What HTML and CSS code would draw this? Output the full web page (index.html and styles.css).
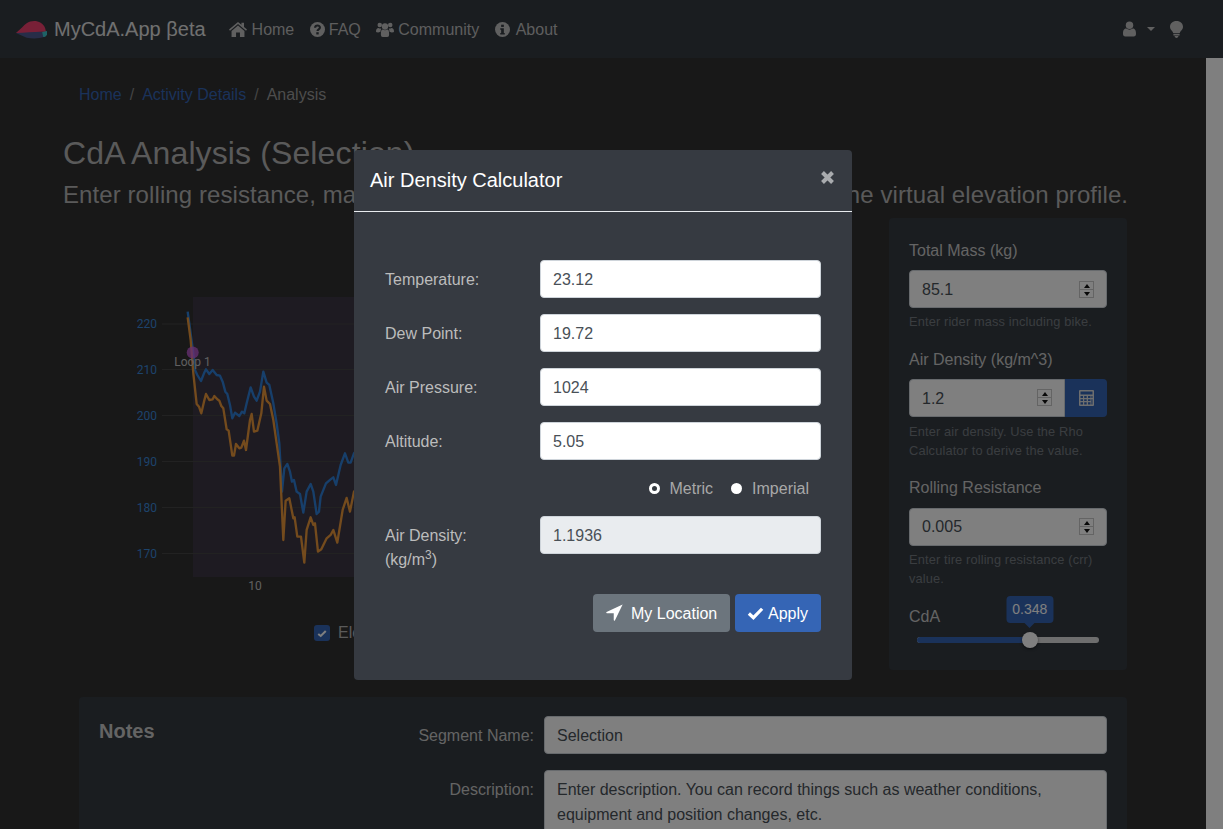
FILE: index.html
```html
<!DOCTYPE html>
<html>
<head>
	<meta charset="utf-8">
	<meta name="viewport" content="width=device-width, initial-scale=1">
	<title>MyCdA.App</title>
	<link rel="stylesheet" href="styles.css">
</head>
<body>
	<nav class="navbar">
		<a class="brand">
			<svg class="logo" viewBox="0 0 34 20"><path class="logo-navy" d="M1 13 L12 18 Q22 20 31 17 L31 12 L10 10z"/><path class="logo-red" d="M1 13 C6 9 9 5 12 3 C18 -1 28 0 31 8 L32 12 C24 11 12 13 1 13z"/><path class="logo-teal" d="M28 12 L33 11 L33 15 Q31 18 29 17z"/></svg>
			MyCdA.App βeta
		</a>
		<a class="nav-link">
			<svg class="ic ic-home" viewBox="0 0 24 20"><path d="M12 0 L0 10 l1.3 1.6 L12 2.7 l10.7 8.9 L24 10 l-4-3.4 V1 h-3.4 v2.8z M12 4.8 L3.4 12 v8 h6 v-6 h5.2 v6 h6 v-8z"/></svg>
			Home</a>
		<a class="nav-link">
			<svg class="ic ic-round" viewBox="0 0 20 20"><circle cx="10" cy="10" r="10"/><path class="ic-cut" d="M6.8 7.6 C7 3.8 13.2 3.8 13.2 7.4 C13.2 9.8 10 9.8 10 12"/><rect class="ic-hole" x="8.4" y="13.6" width="3.2" height="3"/></svg>
			FAQ</a>
		<a class="nav-link">
			<svg class="ic ic-users" viewBox="0 0 24 20"><circle cx="5" cy="4" r="3"/><circle cx="19" cy="4" r="3"/><circle cx="12" cy="6" r="4.2"/><path d="M0 13 Q0 8 3.5 8 Q5 9 7 8.6 Q6 11 6 13 L3 14 Q0 14 0 13z M24 13 Q24 8 20.5 8 Q19 9 17 8.6 Q18 11 18 13 L21 14 Q24 14 24 13z M6.5 17 C6.5 12 7 10 9 10 Q12 12 15 10 C17 10 17.5 12 17.5 17 Q17.5 20 15 20 H9 Q6.5 20 6.5 17z"/></svg>
			Community</a>
		<a class="nav-link">
			<svg class="ic ic-round ic-info" viewBox="0 0 20 20"><circle cx="10" cy="10" r="10"/><rect class="ic-hole" x="8.2" y="3.6" width="3.6" height="3"/><path class="ic-hole" d="M7 8.2 h4.8 v6.4 h1.2 v2 H7 v-2 h1.2 v-4.4 H7z"/></svg>
			About</a>
		<div class="nav-right">
			<svg class="ic ic-user" viewBox="0 0 14 16"><circle cx="7" cy="4" r="4"/><path d="M0 13 C0 9 1.5 7.5 3.4 7.5 Q7 10 10.6 7.5 C12.5 7.5 14 9 14 13 Q14 16 11.5 16 H2.5 Q0 16 0 13z"/></svg>
			<span class="caret"></span>
			<svg class="ic ic-bulb" viewBox="0 0 13 17"><path d="M6.5 0 C2.6 0 0 2.6 0 5.8 C0 9 2.6 9.6 3.2 12 H9.8 C10.4 9.6 13 9 13 5.8 C13 2.6 10.4 0 6.5 0z M3.4 12.8 H9.6 V14.4 H3.4z M4.4 15.1 H8.6 Q7.8 17 6.5 17 Q5.2 17 4.4 15.1z"/></svg>
		</div>
	</nav>

	<div class="page">
		<main class="content">
			<ol class="breadcrumb">
				<li><a>Home</a></li>
				<li class="sep">/</li>
				<li><a>Activity Details</a></li>
				<li class="sep">/</li>
				<li>Analysis</li>
			</ol>
			<h2 class="title">CdA Analysis (Selection)</h2>
			<h4 class="subtitle">Enter rolling resistance, mass, and air density, then adjust CdA to flatten the virtual elevation profile.</h4>

			<div class="analysis">
				<div class="chart-col">
					<svg class="chart" viewBox="79 218 810 400">
						<rect class="plot-bg" x="193" y="297" width="640" height="280"/>
						<g class="grid">
							<line x1="162" x2="833" y1="324" y2="324"/>
							<line x1="162" x2="833" y1="369.5" y2="369.5"/>
							<line x1="162" x2="833" y1="415.5" y2="415.5"/>
							<line x1="162" x2="833" y1="461.5" y2="461.5"/>
							<line x1="162" x2="833" y1="507.5" y2="507.5"/>
							<line x1="162" x2="833" y1="553.5" y2="553.5"/>
						</g>
						<g class="y-labels">
							<text x="157" y="328">220</text>
							<text x="157" y="374">210</text>
							<text x="157" y="420">200</text>
							<text x="157" y="466">190</text>
							<text x="157" y="512">180</text>
							<text x="157" y="558">170</text>
						</g>
						<text class="x-label" x="255" y="590">10</text>
						<g transform="translate(100 280) scale(.3333)">
							<polyline class="line-blue" points="263,95 268,130 278,205 285,270 292,285 303,303 312,280 318,268 328,282 338,270 350,285 360,287 368,305 376,335 382,342 390,375 397,415 405,398 418,408 426,395 433,400 440,370 452,322 462,350 470,362 480,335 490,275 500,308 508,315 520,370 530,430 538,490 546,635 553,565 562,552 570,575 576,605 582,600 590,635 600,642 610,698 620,635 632,612 640,635 650,702 657,695 662,650 678,610 692,598 700,592 708,615 722,555 735,520 745,548 752,548 762,520 790,490"/>
							<polyline class="line-orange" points="263,112 272,180 280,280 290,372 297,380 304,400 312,365 318,342 328,360 338,358 343,348 352,358 358,362 364,378 370,385 380,448 386,452 397,527 402,527 408,492 418,505 424,503 432,482 438,510 450,420 455,402 462,455 472,452 484,400 492,320 500,362 510,372 520,420 530,490 540,560 550,780 557,662 568,655 580,715 584,712 592,770 603,770 613,848 620,750 632,712 640,735 645,730 654,815 664,808 680,775 692,765 700,750 712,788 728,690 740,654 750,695 762,635 790,600"/>
						</g>
						<circle class="marker" cx="192.7" cy="352.5" r="6"/>
						<text class="marker-label" x="192.5" y="365.5">Loop 1</text>
					</svg>
					<div class="legend">
						<span class="check"><svg viewBox="0 0 12 10"><polyline points="1.5,5.5 4.5,8 10.5,2"/></svg></span>
						<span>Elevation</span>
						<span class="check"><svg viewBox="0 0 12 10"><polyline points="1.5,5.5 4.5,8 10.5,2"/></svg></span>
						<span>Virtual Elevation</span>
					</div>
				</div>

				<aside class="side-panel">
					<div class="group">
						<label>Total Mass (kg)</label>
						<div class="spin-wrap">
							<input class="field" type="number" value="85.1">
							<span class="spin"><i class="spin-up"></i><i class="spin-down"></i></span>
						</div>
						<small>Enter rider mass including bike.</small>
					</div>
					<div class="group">
						<label>Air Density (kg/m^3)</label>
						<div class="input-group">
							<div class="spin-wrap">
								<input class="field" type="number" value="1.2">
								<span class="spin"><i class="spin-up"></i><i class="spin-down"></i></span>
							</div>
							<button class="calc-btn" type="button">
								<svg viewBox="0 0 15 16"><path fill-rule="evenodd" d="M1 0 H14 Q15 0 15 1 V15 Q15 16 14 16 H1 Q0 16 0 15 V1 Q0 0 1 0z M1.5 1.5 V4.5 H13.5 V1.5z M1.5 6 V8 H4 V6z M5.2 6 V8 H7.7 V6z M9 6 V8 H11.5 V6z M12.4 6 V8 H13.5 V6z M1.5 9.2 V11 H4 V9.2z M5.2 9.2 V11 H7.7 V9.2z M9 9.2 V11 H11.5 V9.2z M12.4 9.2 V14.5 H13.5 V9.2z M1.5 12.2 V14.5 H4 V12.2z M5.2 12.2 V14.5 H7.7 V12.2z M9 12.2 V14.5 H11.5 V12.2z"/></svg>
							</button>
						</div>
						<small>Enter air density. Use the Rho Calculator to derive the value.</small>
					</div>
					<div class="group group-crr">
						<label>Rolling Resistance</label>
						<div class="spin-wrap">
							<input class="field" type="number" value="0.005">
							<span class="spin"><i class="spin-up"></i><i class="spin-down"></i></span>
						</div>
						<small>Enter tire rolling resistance (crr) value.</small>
					</div>
					<label>CdA</label>
					<div class="slider">
						<div class="track"><div class="track-fill" style="width: 62%"></div></div>
						<div class="thumb" style="left: 62%"><span class="bubble">0.348</span></div>
					</div>
				</aside>
			</div>

			<section class="notes">
				<h5>Notes</h5>
				<div class="notes-form">
					<div class="notes-row">
						<label>Segment Name:</label>
						<input class="field" type="text" value="Selection">
					</div>
					<div class="notes-row">
						<label>Description:</label>
						<textarea class="field" rows="3">Enter description. You can record things such as weather conditions, equipment and position changes, etc.</textarea>
					</div>
				</div>
			</section>
		</main>
		<div class="scrollbar"></div>
	</div>

	<!-- modal -->
	<div class="backdrop">
		<div class="modal">
			<div class="modal-header">
				<h5>Air Density Calculator</h5>
				<svg class="close" viewBox="0 0 12 12"><path d="M2 2 L10 10 M10 2 L2 10"/></svg>
			</div>
			<div class="modal-body">
				<div class="calc-row">
					<label>Temperature:</label>
					<input class="field" type="number" value="23.12">
				</div>
				<div class="calc-row">
					<label>Dew Point:</label>
					<input class="field" type="number" value="19.72">
				</div>
				<div class="calc-row">
					<label>Air Pressure:</label>
					<input class="field" type="number" value="1024">
				</div>
				<div class="calc-row">
					<label>Altitude:</label>
					<input class="field" type="number" value="5.05">
				</div>
				<div class="units">
					<span class="radio radio-on"></span><span class="unit-name">Metric</span>
					<span class="radio"></span><span class="unit-name">Imperial</span>
				</div>
				<div class="calc-row calc-result">
					<label>Air Density:<br>(kg/m<sup>3</sup>)</label>
					<input class="field" type="text" value="1.1936" disabled>
				</div>
				<div class="modal-actions">
					<button class="btn btn-gray" type="button">
						<svg viewBox="0 0 18 18"><path d="M17.6 0.4 L0.6 8.6 Q-0.2 9.4 1 9.8 L8.2 9.8 L8.2 17 Q8.6 18.2 9.4 17.4z"/></svg>
						My Location
					</button>
					<button class="btn btn-blue" type="button">
						<svg viewBox="0 0 18 14"><polyline points="2,7.5 6.8,12 16,2.5"/></svg>
						Apply
					</button>
				</div>
			</div>
		</div>
	</div>
</body>
</html>
```

FILE: styles.css
```css
* {
	box-sizing: border-box;
}

html, body {
	height: 100%;
}

body {
	margin: 0;
	overflow: hidden;
	background: #303030;
	color: #b4b4b4;
	font-family: "Liberation Sans", Arial, sans-serif;
	font-size: 16px;
	line-height: 24px;
}

/* navbar */
.navbar {
	display: flex;
	align-items: center;
	height: 58px;
	padding-left: 15px;
	background: #343a40;
}

.brand {
	display: flex;
	align-items: center;
	gap: 6px;
	margin-right: 16px;
	color: #e0e0e0;
	font-size: 20px;
}

.logo {
	width: 33px;
	height: 20px;
	margin-top: 2px;
}
.logo-red { fill: #f0406f; }
.logo-navy { fill: #4e5a90; }
.logo-teal { fill: #3cc4cc; }

.nav-link {
	display: flex;
	align-items: center;
	gap: 4px;
	padding: 2px 8px 0;
	color: #bcbcbc;
	font-size: 16px;
	margin-right: -0.5px;
}
.nav-link .ic {
	margin-top: -2px;
}

.ic {
	fill: #c0c0c0;
	flex: none;
}
.ic-home { width: 18px; height: 15px; margin-left: -1px; margin-right: 1px; }
.ic-round { width: 15px; height: 15px; }
.ic-users { width: 18px; height: 15px; }
.ic-user { width: 13px; height: 16px; }
.ic-bulb { width: 13px; height: 17px; }
.ic-info { margin-right: 2px; }
.ic-hole { fill: #343a40; }
.ic-cut {
	fill: none;
	stroke: #343a40;
	stroke-width: 2.8;
}

.nav-right {
	display: flex;
	align-items: center;
	margin-left: auto;
	padding-right: 40px;
}

.caret {
	width: 0;
	height: 0;
	margin: 0 15px 0 11px;
	border-top: 4px solid #c0c0c0;
	border-left: 4px solid transparent;
	border-right: 4px solid transparent;
}

/* page under the navbar */
.page {
	display: flex;
	height: calc(100% - 58px);
}

.content {
	flex: 1;
	min-width: 0;
	padding: 25px 63px 0 63px;
}

.scrollbar {
	flex: none;
	width: 17px;
	background: #fff;
}

.breadcrumb {
	display: flex;
	gap: 8px;
	margin: 0 0 27px;
	padding: 0 0 0 16px;
	list-style: none;
	color: #9a9a9a;
}
.breadcrumb a { color: #3565b5; }
.sep { color: #888; }

.title {
	margin: 0 0 8px;
	font-size: 32px;
	font-weight: 400;
	line-height: 38.4px;
	letter-spacing: .12px;
}

.subtitle {
	margin: 0 0 9px;
	font-size: 24px;
	font-weight: 400;
	line-height: 29px;
	letter-spacing: .085px;
	white-space: nowrap;
}

.analysis {
	display: flex;
	margin-left: 16px;
	margin-right: 16px;
}

.chart-col {
	flex: 1;
	min-width: 0;
}

.chart {
	display: block;
	width: 810px;
	height: 400px;
}

.plot-bg { fill: #3d3744; }
.grid line {
	stroke: #444;
	stroke-width: 1;
}
.y-labels text {
	fill: #3a86d6;
	font-family: Roboto, sans-serif;
	font-size: 12px;
	text-anchor: end;
}
.x-label, .marker-label {
	fill: #c0c0c0;
	font-family: Roboto, sans-serif;
	font-size: 12px;
	text-anchor: middle;
}
.line-blue, .line-orange {
	fill: none;
	stroke-width: 7;
	stroke-linejoin: round;
}
.line-blue { stroke: #2f7fd6; }
.line-orange { stroke: #e8963a; }
.marker { fill: #d060e8; fill-opacity: .75; }

.legend {
	display: flex;
	align-items: center;
	gap: 8px;
	height: 24px;
	margin-top: 3px;
	padding-left: 235px;
}

.check {
	display: flex;
	align-items: center;
	justify-content: center;
	width: 16px;
	height: 16px;
	border-radius: 3px;
	background: #3565b5;
}
.check svg {
	width: 10px;
	height: 9px;
	fill: none;
	stroke: #fff;
	stroke-width: 2.4;
}

/* inputs */
.field {
	display: block;
	width: 100%;
	height: 38px;
	padding: 7px 12px 5px;
	border: 1px solid #ced4da;
	border-radius: 4px;
	background: #fff;
	color: #495057;
	font: 16px/24px "Liberation Sans", Arial, sans-serif;
	outline: none;
}

.field:disabled {
	background: #e9ecef;
	opacity: 1;
}

.field::-webkit-inner-spin-button {
	-webkit-appearance: none;
}

.spin-wrap {
	position: relative;
	flex: 1;
	min-width: 0;
}

/* old style number stepper, always visible */
.spin {
	position: absolute;
	top: 11px;
	right: 13px;
	display: flex;
	flex-direction: column;
	width: 15px;
	height: 17px;
	border: 1px solid #c8c8c8;
}
.input-group .spin, .group-crr .spin {
	top: 10px;
}
.spin i {
	display: flex;
	flex: 1;
	align-items: center;
	justify-content: center;
}
.spin-up {
	border-bottom: 1px solid #c8c8c8;
}
.spin-up::before, .spin-down::before {
	content: "";
	border-left: 3.5px solid transparent;
	border-right: 3.5px solid transparent;
}
.spin-up::before {
	border-bottom: 4px solid #111;
}
.spin-down::before {
	border-top: 4px solid #111;
}

/* right panel */
.side-panel {
	flex: none;
	width: 238px;
	height: 452px;
	padding: 20px 20px 0;
	border-radius: 4px;
	background: #343a40;
	color: #c8c8c8;
}

.side-panel label {
	display: block;
	margin-bottom: 7px;
	padding-top: 1px;
}

.group {
	margin-bottom: 16px;
}
.group-crr label {
	margin-bottom: 8px;
}
.group-crr .field {
	padding: 6px 12px;
}

.group small {
	display: block;
	margin-top: 4px;
	color: #757a80;
	font-size: 12.8px;
	line-height: 19px;
	letter-spacing: .14px;
}
.group .input-group + small {
	margin-top: 5px;
	margin-bottom: -1px;
}

.input-group {
	display: flex;
}
.input-group .field {
	border-radius: 4px 0 0 4px;
}

.calc-btn {
	flex: none;
	width: 42px;
	padding: 0;
	border: 0;
	border-radius: 0 4px 4px 0;
	background: #3565b5;
}
.calc-btn svg {
	display: block;
	width: 15px;
	height: 16px;
	margin: auto;
	fill: #ddd;
}

.slider {
	position: relative;
	height: 34px;
	margin: -7px 8px 0;
}

.track {
	position: relative;
	top: 8px;
	height: 6px;
	border-radius: 3px;
	background: #ddd;
	overflow: hidden;
}
.track-fill {
	height: 100%;
	background: #3565b5;
}

.thumb {
	position: absolute;
	top: 3px;
	width: 16px;
	height: 16px;
	margin-left: -8px;
	border-radius: 50%;
	background: #fff;
	box-shadow: 0 1px 3px rgba(0,0,0,.5);
}

.bubble {
	position: absolute;
	left: 50%;
	bottom: 25px;
	transform: translateX(-50%);
	padding: 0 6px;
	height: 27px;
	border-radius: 4px;
	background: #3565b5;
	color: #fff;
	font-size: 14px;
	line-height: 27px;
}
.bubble::after {
	content: "";
	position: absolute;
	left: 50%;
	top: 100%;
	margin-left: -5px;
	border-top: 5px solid #3565b5;
	border-left: 5px solid transparent;
	border-right: 5px solid transparent;
}

/* notes */
.notes {
	display: flex;
	margin: 27px 16px 0 16px;
	padding: 19px 20px 20px 20px;
	border-radius: 4px;
	background: #343a40;
}

.notes h5 {
	flex: none;
	margin: 3px 0 0;
	color: #c8c8c8;
	font-size: 20px;
	line-height: 24px;
}

.notes-form {
	flex: 1;
}

.notes-row {
	display: flex;
	margin-bottom: 16px;
}
.notes-row label {
	flex: 1;
	padding: 8px 10px 0 0;
	color: #c8c8c8;
	text-align: right;
}
.notes-row .field {
	flex: none;
	width: 563px;
}
.notes-row textarea.field {
	height: 100px;
	padding-top: 6px;
	line-height: 25px;
	resize: none;
}

/* modal */
.backdrop {
	position: fixed;
	top: 0;
	left: 0;
	right: 0;
	bottom: 0;
	display: flex;
	align-items: center;
	justify-content: center;
	padding-right: 17px;
	background: rgba(0,0,0,.5);
}

.modal {
	width: 498px;
	height: 530px;
	border-radius: 4px;
	background: #363a41;
	color: #bcbcbc;
}

.modal-header {
	display: flex;
	align-items: center;
	justify-content: space-between;
	height: 62px;
	padding: 0 17px 0 16px;
	border-bottom: 1px solid #e9ecef;
}

.modal-header h5 {
	margin: 0;
	color: #fff;
	font-size: 20px;
	font-weight: 400;
	line-height: 24px;
}

.close {
	width: 15px;
	height: 15px;
	margin: -6px 0 0;
	fill: none;
	stroke: #a9abae;
	stroke-width: 3.2;
}

.modal-body {
	padding: 48px 31px 0;
}

.calc-row {
	display: flex;
	margin-bottom: 16px;
}
.calc-row label {
	flex: none;
	width: 155px;
	padding-top: 8px;
}
.calc-row .field {
	width: 281px;
}

.calc-result {
	margin-bottom: 22px;
}
sup {
	font-size: 12px;
	line-height: 0;
}

.units {
	display: flex;
	align-items: center;
	justify-content: flex-end;
	height: 26px;
	margin-bottom: 14px;
	padding-right: 12px;
	color: #a8a8a8;
}
.unit-name {
	margin-left: 10px;
}
.unit-name:nth-child(2) {
	margin-right: 18px;
}

.radio {
	width: 11px;
	height: 11px;
	border-radius: 50%;
	background: #fff;
}
.radio-on {
	border: 3px solid #fff;
	background: #343a40;
}

.modal-actions {
	display: flex;
	justify-content: flex-end;
	gap: 5px;
}

.btn {
	display: flex;
	align-items: center;
	height: 38px;
	padding: 2px 0 0 12px;
	border: 0;
	border-radius: 4px;
	color: #fff;
	font: 16px/24px "Liberation Sans", Arial, sans-serif;
}
.btn svg {
	margin-top: -2px;
}

.btn-gray {
	gap: 8px;
	width: 137px;
	padding-left: 13px;
	background: #6c757d;
}
.btn-gray svg {
	width: 17px;
	height: 17px;
	fill: #fff;
}

.btn-blue {
	gap: 4px;
	width: 86px;
	background: #3565b5;
}
.btn-blue svg {
	width: 17px;
	height: 14px;
	fill: none;
	stroke: #fff;
	stroke-width: 3.4;
}
```
